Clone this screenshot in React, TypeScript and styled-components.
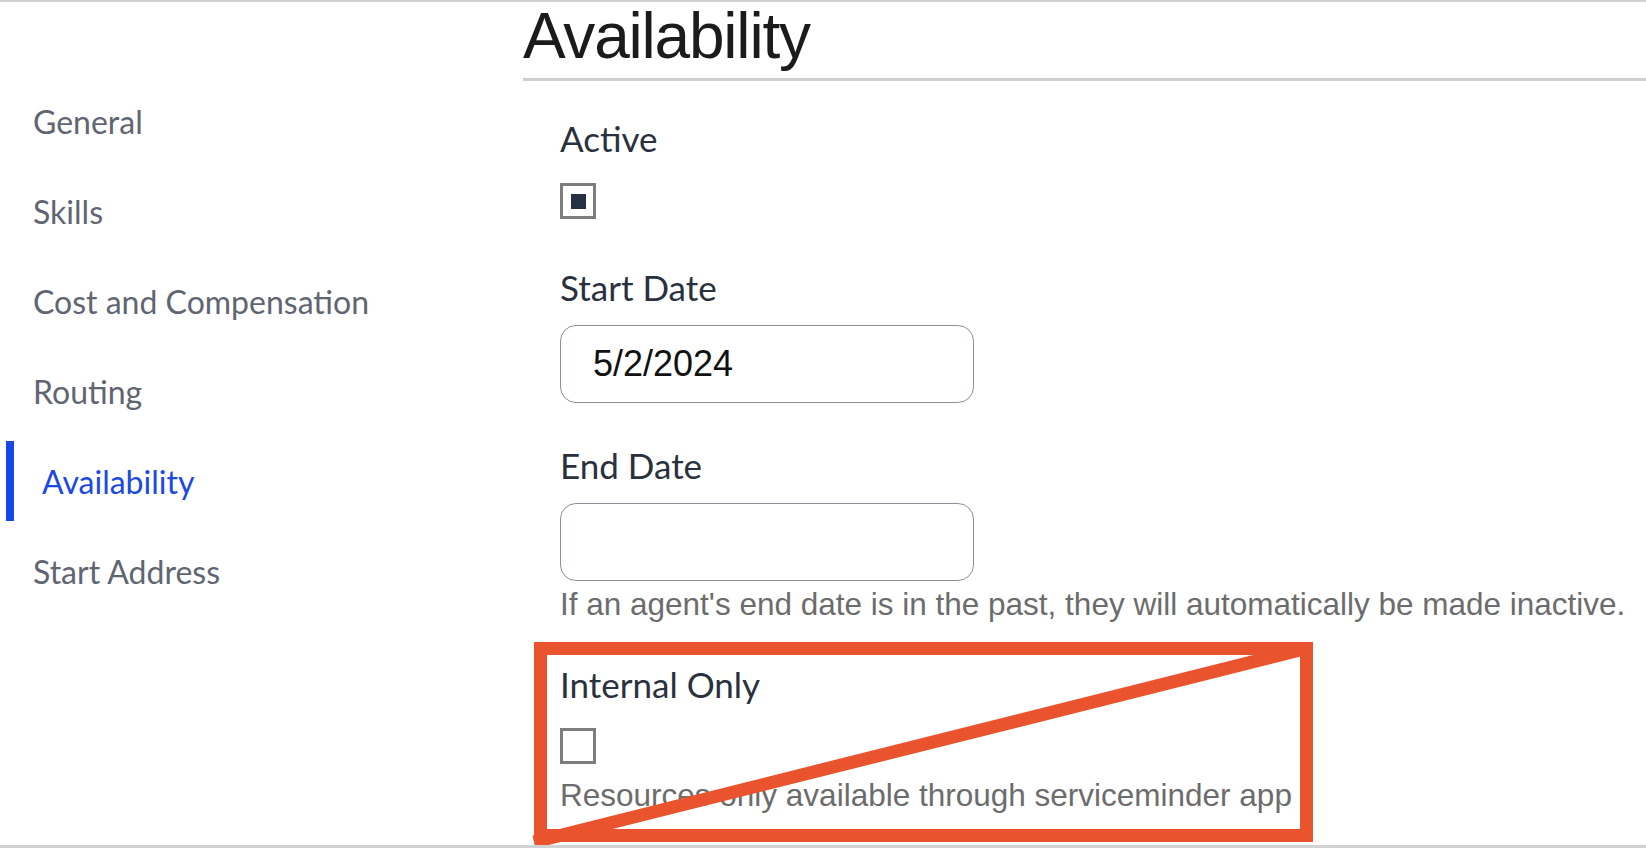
import React from "react";
import styled, { createGlobalStyle } from "styled-components";

const Global = createGlobalStyle`
  html, body { margin: 0; padding: 0; background: #ffffff; }
  * { box-sizing: border-box; }
`;

const Page = styled.div`
  position: relative;
  width: 1646px;
  height: 848px;
  overflow: hidden;
  background: #fff;
  border-top: 2px solid #d2d2d2;
  border-bottom: 3px solid #d2d2d2;
  display: flex;
`;

const Sidebar = styled.nav`
  width: 523px;
  flex: none;
  padding-top: 79px;
  display: flex;
  flex-direction: column;
  gap: 10px;
`;

const NavItem = styled.div<{ $active?: boolean }>`
  height: 80px;
  display: flex;
  align-items: center;
  font-family: Lato, "Noto Sans", sans-serif;
  font-size: 32px;
  color: ${(p) => (p.$active ? "#1c48e3" : "#5f6571")};
  margin-left: ${(p) => (p.$active ? "6px" : "0")};
  padding-left: ${(p) => (p.$active ? "28px" : "33px")};
  border-left: ${(p) => (p.$active ? "8px solid #1546e6" : "none")};
`;

const Main = styled.main`
  flex: 1;
  min-width: 0;
  display: flex;
  flex-direction: column;
`;

const Title = styled.h1`
  margin: 2px 0 0;
  padding-bottom: 8px;
  height: 77px;
  font-family: "Liberation Sans", Arial, sans-serif;
  font-weight: 400;
  font-size: 64px;
  line-height: 64px;
  letter-spacing: -1.2px;
  color: #1b1b1b;
  border-bottom: 3px solid #cfcfcf;
`;

const Form = styled.div`
  padding: 37px 0 0 37px;
  display: flex;
  flex-direction: column;
`;

const Field = styled.div<{ $after: number }>`
  display: flex;
  flex-direction: column;
  align-items: flex-start;
  margin-bottom: ${(p) => p.$after}px;
`;

const Label = styled.div<{ $gap: number }>`
  font-family: Lato, "Noto Sans", sans-serif;
  font-size: 35px;
  line-height: 40px;
  color: #2a313e;
  margin-bottom: ${(p) => p.$gap}px;
`;

const Check = styled.div<{ $checked?: boolean }>`
  width: 36px;
  height: 36px;
  border: 3px solid #7d7d7d;
  background: #fff;
  display: flex;
  align-items: center;
  justify-content: center;
  &::after {
    content: "";
    display: ${(p) => (p.$checked ? "block" : "none")};
    width: 15px;
    height: 15px;
    background: #263244;
  }
`;

const DateInput = styled.div`
  width: 414px;
  height: 78px;
  border: 1px solid #8d909a;
  border-radius: 16px;
  display: flex;
  align-items: center;
  padding-left: 32px;
  font-family: "Liberation Sans", Arial, sans-serif;
  font-size: 36px;
  color: #111;
`;

const Hint = styled.div<{ $top: number }>`
  margin-top: ${(p) => p.$top}px;
  font-family: "Liberation Sans", Arial, sans-serif;
  font-size: 31.5px;
  line-height: 36px;
  color: #6c6c6c;
  white-space: nowrap;
`;

const Annotation = styled.div`
  position: absolute;
  left: 534px;
  top: 640px;
  width: 779px;
  height: 200px;
  border: 13px solid #e9542f;
  pointer-events: none;
`;

const Strike = styled.svg`
  position: absolute;
  left: -13px;
  top: -13px;
  width: 779px;
  height: 200px;
  overflow: visible;
`;

const navItems = [
  "General",
  "Skills",
  "Cost and Compensation",
  "Routing",
  "Availability",
  "Start Address",
];

export default function App() {
  return (
    <>
      <Global />
      <Page>
        <Sidebar>
          {navItems.map((n) => (
            <NavItem key={n} $active={n === "Availability"}>
              {n}
            </NavItem>
          ))}
        </Sidebar>
        <Main>
          <Title>Availability</Title>
          <Form>
            <Field $after={48}>
              <Label $gap={25}>Active</Label>
              <Check $checked />
            </Field>
            <Field $after={42}>
              <Label $gap={18}>Start Date</Label>
              <DateInput>5/2/2024</DateInput>
            </Field>
            <Field $after={42}>
              <Label $gap={18}>End Date</Label>
              <DateInput />
              <Hint $top={5}>
                If an agent's end date is in the past, they will automatically be made inactive.
              </Hint>
            </Field>
            <Field $after={0}>
              <Label $gap={24}>Internal Only</Label>
              <Check />
              <Hint $top={13}>Resources only available through serviceminder app</Hint>
            </Field>
          </Form>
        </Main>
        <Annotation>
          <Strike viewBox="0 0 779 200">
            <line x1="0" y1="200" x2="774" y2="6" stroke="#e9542f" strokeWidth="13" />
          </Strike>
        </Annotation>
      </Page>
    </>
  );
}
